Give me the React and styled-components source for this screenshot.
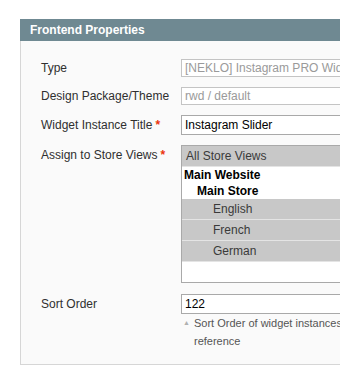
import React from 'react';
import { createGlobalStyle, styled } from 'styled-components';

const GlobalStyle = createGlobalStyle`
  html, body {
    margin: 0;
    padding: 0;
    background: #ffffff;
    overflow: hidden;
  }
  body {
    font-family: "Liberation Sans", Arial, sans-serif;
    font-size: 12px;
    color: #2f2f2f;
  }
`;

const Page = styled.div`
  padding: 19px 0 0 20px;
  width: 480px;
`;

const Header = styled.h4`
  margin: 0;
  height: 22px;
  line-height: 22px;
  padding: 0 10px;
  background: #6f8992;
  color: #ffffff;
  font-size: 12px;
  font-weight: bold;
`;

const Fieldset = styled.div`
  background: #fafafa;
  border: 1px solid #d6d6d6;
  border-top: none;
  padding: 18px 20px 14px 20px;
  display: flex;
  flex-direction: column;
`;

const Row = styled.div`
  display: grid;
  grid-template-columns: 140px 1fr;
  margin-bottom: ${(p) => p.$gap || 10}px;
  &:last-child {
    margin-bottom: 0;
  }
`;

const Label = styled.label`
  padding-top: ${(p) => p.$top || 2}px;
  line-height: 14px;
  color: #2f2f2f;
  white-space: nowrap;
`;

const Required = styled.span`
  color: #eb340a;
  font-weight: bold;
  margin-left: 3px;
`;

const Input = styled.div`
  box-sizing: border-box;
  width: 275px;
  height: ${(p) => (p.$disabled ? 18 : 20)}px;
  line-height: ${(p) => (p.$disabled ? 16 : 18)}px;
  padding: 0 3px;
  background: #ffffff;
  border: 1px solid ${(p) => (p.$disabled ? '#c4c4c4' : '#a9a9a9')};
  color: ${(p) => (p.$disabled ? '#9a9a9a' : '#000000')};
  white-space: nowrap;
  overflow: hidden;
`;

const Select = styled.div`
  box-sizing: border-box;
  width: 275px;
  height: 138px;
  background: #ffffff;
  border: 1px solid #a9a9a9;
  display: flex;
  flex-direction: column;
`;

const Option = styled.div`
  height: 20px;
  line-height: 20px;
  padding-left: ${(p) => p.$indent || 4}px;
  background: #c8c8c8;
  border-bottom: 1px solid #e4e4e4;
  color: #3a3a3a;
  white-space: nowrap;
`;

const Group = styled.div`
  height: 16px;
  line-height: 16px;
  padding-left: ${(p) => p.$indent || 2}px;
  font-weight: bold;
  color: #000000;
  white-space: nowrap;
`;

const Note = styled.div`
  font-size: 11px;
  line-height: 18px;
  color: #555555;
  display: grid;
  grid-template-columns: 13px 1fr;
`;

const Arrow = styled.span`
  font-size: 7px;
  color: #b0b0b0;
  padding-left: 2px;
`;

const NoteText = styled.span`
  white-space: pre;
`;

const App = () => (
  <Page>
    <GlobalStyle />
    <Header>Frontend Properties</Header>
    <Fieldset>
      <Row>
        <Label>Type</Label>
        <Input $disabled>[NEKLO] Instagram PRO Widget</Input>
      </Row>
      <Row>
        <Label>Design Package/Theme</Label>
        <Input $disabled>rwd / default</Input>
      </Row>
      <Row>
        <Label $top={3}>
          Widget Instance Title<Required>*</Required>
        </Label>
        <Input>Instagram Slider</Input>
      </Row>
      <Row $gap={11}>
        <Label $top={3}>
          Assign to Store Views<Required>*</Required>
        </Label>
        <Select>
          <Option>All Store Views</Option>
          <Group>Main Website</Group>
          <Group $indent={15}>Main Store</Group>
          <Option $indent={31}>English</Option>
          <Option $indent={31}>French</Option>
          <Option $indent={31}>German</Option>
        </Select>
      </Row>
      <Row>
        <Label $top={3}>Sort Order</Label>
        <div>
          <Input>122</Input>
          <Note>
            <Arrow>▲</Arrow>
            <NoteText>{'Sort Order of widget instances in the same container\nreference'}</NoteText>
          </Note>
        </div>
      </Row>
    </Fieldset>
  </Page>
);

export default App;
